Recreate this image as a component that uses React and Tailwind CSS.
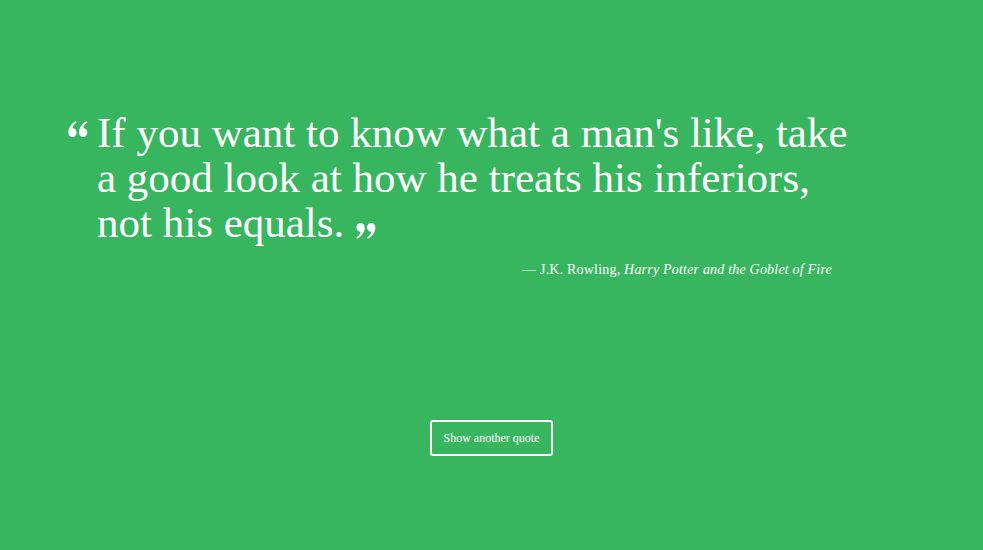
export default function App() {
  return (
    <div className="w-full h-[550px] bg-[#38b65f] text-white overflow-hidden">
      <div className="pt-[110px] pl-[68px]">
        <div className="flex items-start">
          <svg width="20" height="16" viewBox="0 0 20 16" className="mt-[11px] mr-[9px] shrink-0" fill="white">
            <path d="M4.5 16C2 16 0.3 14.2 0.3 11.5C0.3 7 3.5 2.3 7.8 0.3L8.7 1.5C6 3.2 4.7 5.3 4.5 7.3C6.9 7.3 8.6 9 8.6 11.5C8.6 14 6.8 16 4.5 16Z" />
            <path d="M15.2 16C12.7 16 11 14.2 11 11.5C11 7 14.2 2.3 18.5 0.3L19.4 1.5C16.7 3.2 15.4 5.3 15.2 7.3C17.6 7.3 19.3 9 19.3 11.5C19.3 14 17.5 16 15.2 16Z" />
          </svg>
          <p className="w-[770px] text-[43px] leading-[45px] font-['Liberation_Serif',serif]">
            If you want to know what a man's like, take a good look at how he treats his inferiors, not his equals.
            <svg width="20" height="16" viewBox="0 0 20 16" className="inline-block ml-[12px] align-[-2px]" fill="white">
              <path d="M4.5 0C7 0 8.7 1.8 8.7 4.5C8.7 9 5.5 13.7 1.2 15.7L0.3 14.5C3 12.8 4.3 10.7 4.5 8.7C2.1 8.7 0.4 7 0.4 4.5C0.4 2 2.2 0 4.5 0Z" />
              <path d="M15.2 0C17.7 0 19.4 1.8 19.4 4.5C19.4 9 16.2 13.7 11.9 15.7L11 14.5C13.7 12.8 15 10.7 15.2 8.7C12.8 8.7 11.1 7 11.1 4.5C11.1 2 12.9 0 15.2 0Z" />
            </svg>
          </p>
        </div>
        <div className="w-[764px] text-right mt-[14px] text-[14px] tracking-[0.2px] font-['Liberation_Serif',serif]">
          — J.K. Rowling, <cite className="italic">Harry Potter and the Goblet of Fire</cite>
        </div>
      </div>
      <div className="flex justify-center mt-[140px]">
        <button className="border-2 border-white rounded-[3px] w-[123px] h-[36px] text-[12px] font-['Liberation_Serif',serif] text-white">
          Show another quote
        </button>
      </div>
    </div>
  );
}
